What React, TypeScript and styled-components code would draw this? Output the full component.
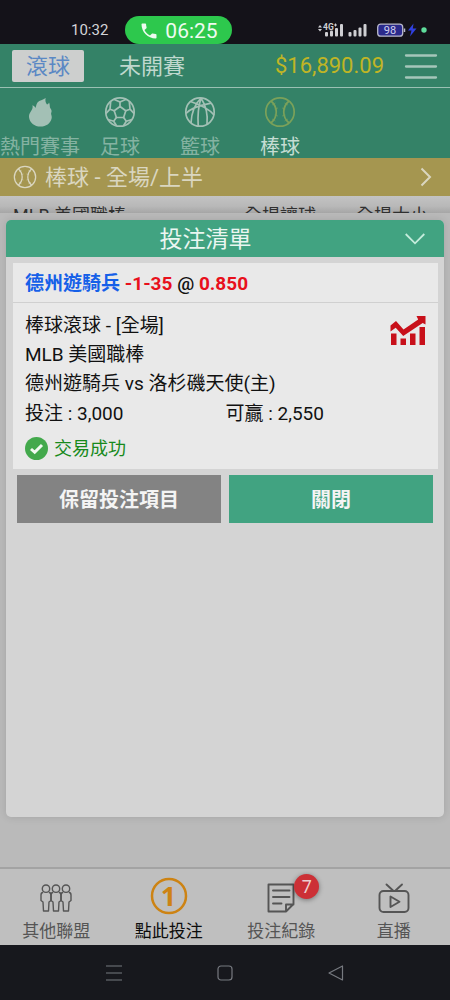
import React from "react";
import styled, { createGlobalStyle } from "styled-components";

const GlobalStyle = createGlobalStyle`
  *, *::before, *::after { box-sizing: border-box; }
  body {
    margin: 0;
    background: #bababa;
    font-family: Roboto, "Noto Sans CJK TC", sans-serif;
    color: #111;
  }
  button { font: inherit; color: inherit; background: none; border: 0; padding: 0; cursor: pointer; }
  svg { display: block; flex: none; }
`;

const Screen = styled.div`
  display: flex;
  flex-direction: column;
  min-height: 100vh;
`;

const StatusBar = styled.header`
  display: flex;
  align-items: center;
  padding: 16px 22px 0 71px;
  background: #141219;
`;

const Clock = styled.time`
  font-size: 15px;
  line-height: 28px;
  color: #d4d4d8;
`;

const CallPill = styled.button`
  display: flex;
  align-items: center;
  gap: 6px;
  height: 28px;
  margin-left: 17px;
  padding: 2px 14px 0;
  border-radius: 14px;
  background: #2dc84d;
  color: #eefbf0;
  font-size: 21px;
  line-height: 26px;
`;

const StatusIcons = styled.div`
  display: flex;
  margin-left: auto;
`;

const TopBar = styled.div`
  display: flex;
  align-items: center;
  height: 44px;
  padding: 0 12px;
  background: #348267;
  border-bottom: 1px solid #9ac0b3;
  font-size: 22px;
  line-height: 30px;
`;

const ModeButton = styled.button<{ $active?: boolean }>`
  width: 72px;
  height: 32px;
  padding-top: 2px;
  border-radius: 2px;
  white-space: nowrap;
  background: ${(p) => (p.$active ? "#cdcfce" : "transparent")};
  color: ${(p) => (p.$active ? "#5b88c4" : "#bfd8ce")};
  & + & { margin-left: 32px; }
`;

const Balance = styled.span`
  margin-left: auto;
  color: #c0b525;
`;

const MenuButton = styled.button`
  margin-left: 20px;
`;

const SportsNav = styled.nav`
  display: flex;
  height: 70px;
  background: #348267;
`;

const SportTab = styled.button<{ $active?: boolean }>`
  display: flex;
  flex-direction: column;
  align-items: center;
  width: 80px;
  padding-top: 8px;
  gap: 4px;
  font-size: 20px;
  line-height: 30px;
  white-space: nowrap;
  color: ${(p) => (p.$active ? "#c5ddd3" : "#85b3a2")};
  svg { color: ${(p) => (p.$active ? "#7ba15a" : "#a3c0b5")}; }
`;

const MarketBar = styled.button`
  display: flex;
  align-items: center;
  gap: 8px;
  height: 38px;
  padding: 0 18px 0 13px;
  background: #a59650;
  color: #dad6c0;
  font-size: 22px;
  line-height: 32px;
`;

const MarketName = styled.span`
  flex: 1;
  padding-top: 2px;
  text-align: left;
`;

const LeagueRow = styled.div`
  display: flex;
  height: 17px;
  padding: 6px 22px 0 13px;
  overflow: hidden;
  background: linear-gradient(#c3c3c3, #b8b8b8 60%, #a6a6a6);
  color: #303030;
  font-size: 18px;
  line-height: 27px;
`;

const LeagueName = styled.span`
  flex: 1;
`;

const ColumnName = styled.span`
  margin-left: 40px;
`;

const Main = styled.main`
  flex: 1;
  display: flex;
  padding: 7px 6px 50px;
  background: #bababa;
`;

const Slip = styled.section`
  flex: 1;
  border-radius: 5px;
  overflow: hidden;
  background: #d4d4d4;
  box-shadow: 0 0 8px rgba(0, 0, 0, 0.12);
`;

const SlipHeader = styled.div`
  display: flex;
  align-items: center;
  height: 37px;
  padding-right: 19px;
  background: #41a381;
  color: #eaf6f1;
`;

const SlipTitle = styled.h1`
  flex: 1;
  margin: 0;
  padding-top: 2px;
  text-align: center;
  font-size: 23px;
  font-weight: 400;
  line-height: 35px;
`;

const Ticket = styled.article`
  margin: 6px 6px 0 7px;
  background: #e9e9e9;
  font-size: 19px;
  line-height: 29px;
`;

const TicketHead = styled.h2`
  margin: 0;
  padding: 6px 12px 4px;
  border-bottom: 1px solid #d0d0d0;
  font-size: 19px;
  font-weight: 700;
  line-height: 29px;
`;

const Team = styled.span`
  color: #1560e8;
`;

const Odds = styled.span`
  color: #e8101c;
`;

const At = styled.span`
  font-weight: 500;
`;

const TicketBody = styled.div`
  display: flex;
  flex-wrap: wrap;
  justify-content: space-between;
  align-items: flex-start;
  padding: 8px 12px 6px;
`;

const Details = styled.div`
  flex: 1;
`;

const Line = styled.p`
  margin: 0;
`;

const ChartButton = styled.button`
  margin-top: 4px;
`;

const Amounts = styled.div`
  display: grid;
  grid-template-columns: 1fr 1fr;
  width: 100%;
  margin-top: 1px;
`;

const Result = styled.p`
  display: flex;
  align-items: center;
  gap: 6px;
  width: 100%;
  margin: 6px 0 0;
  color: #178a1c;
  font-size: 18px;
`;

const Actions = styled.div`
  display: flex;
  gap: 8px;
  padding: 6px 11px;
`;

const ActionButton = styled.button<{ $primary?: boolean }>`
  flex: 1;
  height: 48px;
  padding-bottom: 2px;
  background: ${(p) => (p.$primary ? "#41a381" : "#838383")};
  color: #f4f4f4;
  font-size: 20px;
  font-weight: 700;
`;

const BottomNav = styled.nav`
  display: flex;
  height: 78px;
  border-top: 2px solid #a3a3a3;
  background: #bfbfbf;
`;

const NavItem = styled.button<{ $active?: boolean }>`
  flex: 1;
  display: flex;
  flex-direction: column;
  align-items: center;
  padding-top: 8px;
  gap: 4px;
  font-size: 17px;
  line-height: 24px;
  color: ${(p) => (p.$active ? "#0c0c0c" : "#555")};
`;

const IconSlot = styled.span<{ $active?: boolean }>`
  position: relative;
  display: flex;
  align-items: center;
  justify-content: center;
  height: 38px;
  padding-top: ${(p) => (p.$active ? "0" : "4px")};
`;

const Badge = styled.span`
  position: absolute;
  top: -3px;
  right: -24px;
  width: 25px;
  height: 25px;
  border-radius: 50%;
  background: #cc3036;
  box-shadow: 0 1px 5px rgba(0, 0, 0, 0.4);
  color: #eccfd0;
  font-size: 18px;
  line-height: 25px;
  text-align: center;
`;

const SystemNav = styled.footer`
  display: flex;
  align-items: center;
  justify-content: center;
  height: 55px;
  background: #17181d;
  color: #777a80;
`;

const SystemButton = styled.button`
  display: flex;
  justify-content: center;
  width: 111px;
`;

const PhoneIcon = () => (
  <svg width="20" height="20" viewBox="0 0 24 24" fill="currentColor">
    <path d="M6.600 10.800c1.400 2.800 3.800 5.100 6.600 6.600l2.200-2.200c.3-.3.7-.4 1-.2 1.100.4 2.300.6 3.600.6.600 0 1 .4 1 1V20c0 .6-.4 1-1 1C10.600 21 3 13.400 3 4c0-.6.4-1 1-1h3.500c.6 0 1 .4 1 1 0 1.200.2 2.400.6 3.600.1.3 0 .7-.2 1z" />
  </svg>
);

const SignalIcons = () => (
  <svg width="110" height="18" viewBox="0 0 110 18">
    <g fill="#cfcfd3">
      <path d="M0 6.500L2 4l2 2.500zM0 8l2 2.500L4 8z" />
      <text x="5" y="8.500" fontSize="8.500" fontWeight="700" fontFamily="Roboto, sans-serif">4G</text>
      <path d="M16 4h3M17.500 2.500v3" stroke="#cfcfd3" fill="none" />
      <rect x="7" y="11" width="3" height="4.500" rx="1" />
      <rect x="12" y="9.500" width="3" height="6" rx="1" />
      <rect x="17" y="7" width="3" height="8.500" rx="1" />
      <rect x="22" y="3" width="3" height="12.500" rx="1" />
      <rect x="30.500" y="11" width="3" height="4.500" rx="1" />
      <rect x="35.500" y="9" width="3" height="6.500" rx="1" />
      <rect x="40.500" y="6.500" width="3" height="9" rx="1" />
      <rect x="45.500" y="3" width="3" height="12.500" rx="1" />
    </g>
    <rect x="59.700" y="3.200" width="25" height="12" rx="3" fill="#2b2a8c" stroke="#b9b9cc" strokeWidth="1.300" />
    <path d="M86.500 7.500v3.500" stroke="#b9b9cc" strokeWidth="1.500" />
    <text x="72" y="13" fontSize="11" textAnchor="middle" fill="#d0d0ee" fontFamily="Roboto, sans-serif">98</text>
    <path d="M95.500 2.500l-5.500 7h3.500l-1.500 6 6.500-8h-3.700z" fill="#3040e0" />
    <circle cx="106" cy="9" r="2.700" fill="#5fdc9c" />
  </svg>
);

const MenuLines = () => (
  <svg width="34" height="28" viewBox="0 0 34 28" stroke="#a5c6ba" strokeWidth="2.300" strokeLinecap="round">
    <path d="M2 3.500h30M2 14.500h30M2 25.500h30" />
  </svg>
);

const FlameIcon = () => (
  <svg width="32" height="32" viewBox="0 0 32 32" fill="currentColor">
    <path d="M21.700 2C21 4.500 21.500 6.500 23 8.500 24 8.200 24.700 7.500 25 6.500 26 8.300 25.600 9.800 26 11.500 26.300 12.800 27.600 13.300 27.600 15 27.600 16.500 26.800 17 27.200 18.500 27.600 20 28 21 27.600 22.500 26.500 27.500 22 30.600 16.500 30.600 10.500 30.600 5.500 26.800 5 21 4.800 18.200 6.200 16.500 7.400 14.500 8.500 12.800 9 11.500 8.400 9.200 10 9.800 10.800 10.600 11.400 11.900 12.500 10 12 8.500 13.500 6.500 15.500 4 18.800 4.200 21.700 2z" />
  </svg>
);

const SoccerIcon = () => (
  <svg width="32" height="32" viewBox="0 0 32 32" fill="none" stroke="currentColor" strokeWidth="1.700" strokeLinejoin="round">
    <circle cx="16" cy="16" r="14.200" />
    <path d="M16 10.500l5.800 4.200-2.200 6.800h-7.200l-2.200-6.800z" />
    <path d="M16 10.500V6M21.800 14.700l4.200-1.500M19.600 21.500l2.700 3.700M12.400 21.500l-2.700 3.700M10.200 14.700L6 13.200" />
    <path d="M9.800 3.300L16 6l6.200-2.700M25.300 5.500L26 13.200l4.200 4.500M28 23.500l-5.700 1.700-2.800 4.500M12.500 29.700l-2.800-4.500L4 23.500M1.800 17.700L6 13.200l.7-7.700" />
  </svg>
);

const BasketballIcon = () => (
  <svg width="32" height="32" viewBox="0 0 32 32" fill="none" stroke="currentColor" strokeWidth="1.700">
    <circle cx="16" cy="16" r="14.200" />
    <path d="M17 2c-2.500 8-3.500 18-2.800 28M17 2c4.500 7 7 16 6 26M17 2C11 8 7.500 16 7 27M2 17.500C8 11 20 8.500 27 7.200M6.500 5.500C14 8 25 12.500 30 19" />
  </svg>
);

const BaseballIcon = ({ size = 32 }: { size?: number }) => (
  <svg width={size} height={size} viewBox="0 0 32 32" fill="none" stroke="currentColor" strokeWidth="1.700">
    <circle cx="16" cy="16" r="14.200" />
    <path d="M7 5c7 6 7 16 0 22M25 5c-7 6-7 16 0 22" />
    <path d="M8 9l3.500-2M10.500 13l3.500-1M10.500 19l3.500 1M8 23l3.500 2M24 9l-3.500-2M21.500 13L18 12M21.500 19l-3.500 1M24 23l-3.500 2" strokeWidth=".6" />
  </svg>
);

const ChevronRight = () => (
  <svg width="12" height="20" viewBox="0 0 12 20" fill="none" stroke="currentColor" strokeWidth="2">
    <path d="M1.500 1.500L10 10l-8.500 8.500" />
  </svg>
);

const ChevronDown = () => (
  <svg width="20" height="12" viewBox="0 0 20 12" fill="none" stroke="#c4ecdc" strokeWidth="1.800">
    <path d="M.7 1L10 10.300 19.300 1" />
  </svg>
);

const TrendIcon = () => (
  <svg width="36" height="30" viewBox="0 0 36 30" fill="#c8101a">
    <path d="M1 18.500h5.500V30H1zM10.500 23.500h5.500V30h-5.500zM20 18.500h5.500V30H20zM29.500 12H35v18h-5.500z" />
    <path d="M.5 10.500L6 6l7.500 8.500L28.200 4.500 26.500 1H35.500v8.500l-2.800-1.600L13.200 21 5.700 12.800.5 16.500z" />
  </svg>
);

const CheckIcon = () => (
  <svg width="23" height="23" viewBox="0 0 23 23">
    <circle cx="11.500" cy="11.500" r="11.500" fill="#43a94c" />
    <path d="M6 12l3.700 3.300L17 8" fill="none" stroke="#f2faf2" strokeWidth="3" />
  </svg>
);

const PeopleIcon = () => (
  <svg width="32" height="28" viewBox="0 0 32 28" fill="none" stroke="currentColor" strokeWidth="1.400" strokeLinejoin="round">
    {[6, 16, 26].map((x) => (
      <g key={x} transform={`translate(${x} 0)`}>
        <circle cx="0" cy="4.700" r="3.700" />
        <path d="M-2.800 8.300C-4.600 8.600-5 9.800-5 11v5.500l2 1.500.5 9h5l.5-9 2-1.500V11c0-1.200-.4-2.400-2.200-2.700" />
      </g>
    ))}
  </svg>
);

const OneIcon = () => (
  <svg width="38" height="38" viewBox="0 0 38 38">
    <circle cx="19" cy="19" r="17" fill="none" stroke="#cd8313" strokeWidth="2.500" />
    <text x="18.500" y="28.500" fontSize="27" fontWeight="700" textAnchor="middle" fill="#cd8313" fontFamily="'Open Sans', sans-serif">1</text>
  </svg>
);

const RecordIcon = () => (
  <svg width="28" height="30" viewBox="0 0 28 30" fill="none" stroke="currentColor" strokeWidth="1.900" strokeLinejoin="round" strokeLinecap="round">
    <path d="M1.500 1.500h25V21l-7.500 7.500H1.500zM26.500 21.500H19v7M6 7.500h16.500M6 14h16.500M6 20.500h8.500" />
  </svg>
);

const TvIcon = () => (
  <svg width="32" height="30" viewBox="0 0 32 30" fill="none" stroke="currentColor" strokeWidth="1.900" strokeLinejoin="round" strokeLinecap="round">
    <rect x="1.500" y="8" width="29" height="21" rx="4" />
    <path d="M8.500 1.500L15 7.500M24 1.500l-6.500 6M12.500 13.500v10.500l9-5.200z" />
  </svg>
);

const sports = [
  { name: "熱門賽事", icon: <FlameIcon /> },
  { name: "足球", icon: <SoccerIcon /> },
  { name: "籃球", icon: <BasketballIcon /> },
  { name: "棒球", icon: <BaseballIcon />, active: true },
];

const navItems = [
  { name: "其他聯盟", icon: <PeopleIcon /> },
  { name: "點此投注", icon: <OneIcon />, active: true },
  { name: "投注紀錄", icon: <RecordIcon />, badge: 7 },
  { name: "直播", icon: <TvIcon /> },
];

export default function App() {
  return (
    <Screen>
      <GlobalStyle />
      <StatusBar>
        <Clock>10:32</Clock>
        <CallPill>
          <PhoneIcon />
          06:25
        </CallPill>
        <StatusIcons>
          <SignalIcons />
        </StatusIcons>
      </StatusBar>

      <TopBar>
        <ModeButton $active>滾球</ModeButton>
        <ModeButton>未開賽</ModeButton>
        <Balance>$16,890.09</Balance>
        <MenuButton aria-label="選單">
          <MenuLines />
        </MenuButton>
      </TopBar>

      <SportsNav>
        {sports.map((s) => (
          <SportTab key={s.name} $active={s.active}>
            {s.icon}
            {s.name}
          </SportTab>
        ))}
      </SportsNav>

      <MarketBar>
        <BaseballIcon size={24} />
        <MarketName>棒球 - 全場/上半</MarketName>
        <ChevronRight />
      </MarketBar>

      <LeagueRow>
        <LeagueName>MLB 美國職棒</LeagueName>
        <ColumnName>全場讓球</ColumnName>
        <ColumnName>全場大小</ColumnName>
      </LeagueRow>

      <Main>
        <Slip>
          <SlipHeader>
            <SlipTitle>投注清單</SlipTitle>
            <button aria-label="收合">
              <ChevronDown />
            </button>
          </SlipHeader>
          <Ticket>
            <TicketHead>
              <Team>德州遊騎兵</Team> <Odds>-1-35</Odds> <At>@</At> <Odds>0.850</Odds>
            </TicketHead>
            <TicketBody>
              <Details>
                <Line>棒球滾球 - [全場]</Line>
                <Line>MLB 美國職棒</Line>
                <Line>德州遊騎兵 vs 洛杉磯天使(主)</Line>
              </Details>
              <ChartButton aria-label="走勢">
                <TrendIcon />
              </ChartButton>
              <Amounts>
                <span>投注 : 3,000</span>
                <span>可贏 : 2,550</span>
              </Amounts>
              <Result>
                <CheckIcon />
                交易成功
              </Result>
            </TicketBody>
          </Ticket>
          <Actions>
            <ActionButton>保留投注項目</ActionButton>
            <ActionButton $primary>關閉</ActionButton>
          </Actions>
        </Slip>
      </Main>

      <BottomNav>
        {navItems.map((n) => (
          <NavItem key={n.name} $active={n.active}>
            <IconSlot $active={n.active}>
              {n.icon}
              {n.badge && <Badge>{n.badge}</Badge>}
            </IconSlot>
            {n.name}
          </NavItem>
        ))}
      </BottomNav>

      <SystemNav>
        <SystemButton aria-label="最近使用">
          <svg width="16" height="16" viewBox="0 0 16 16" stroke="currentColor" strokeWidth="1.200">
            <path d="M0 1h16M0 8h16M0 15h16" />
          </svg>
        </SystemButton>
        <SystemButton aria-label="主畫面">
          <svg width="16" height="16" viewBox="0 0 16 16" fill="none" stroke="currentColor" strokeWidth="1.200">
            <rect x="1" y="1" width="14" height="14" rx="3" />
          </svg>
        </SystemButton>
        <SystemButton aria-label="返回">
          <svg width="16" height="16" viewBox="0 0 16 16" fill="none" stroke="currentColor" strokeWidth="1.200" strokeLinejoin="round">
            <path d="M14.500 1v14L1 8z" />
          </svg>
        </SystemButton>
      </SystemNav>
    </Screen>
  );
}
